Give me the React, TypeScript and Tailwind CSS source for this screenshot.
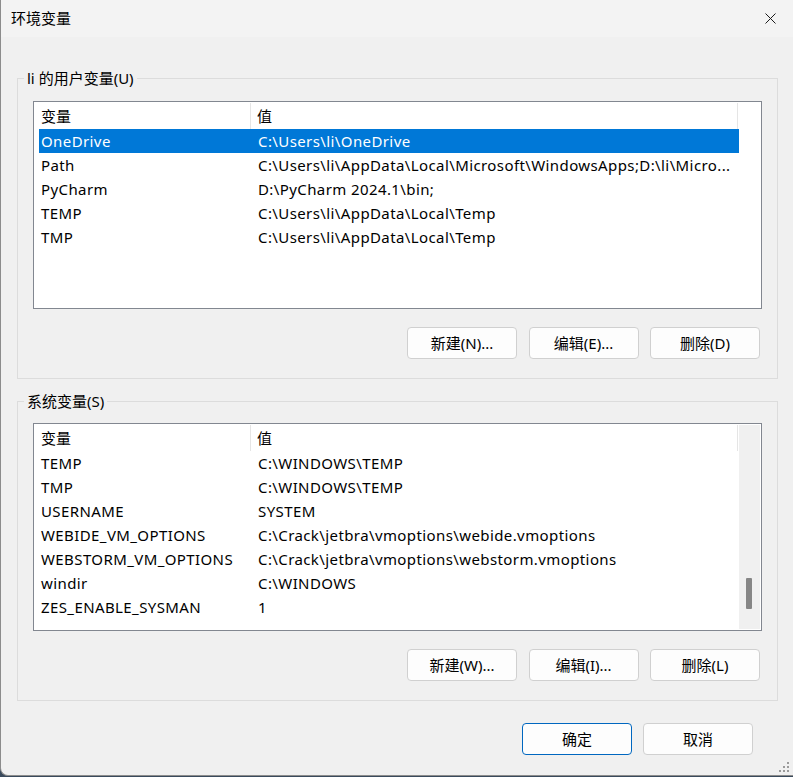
import React from 'react'

const FONT = { fontFamily: '"Noto Sans", "Noto Sans CJK SC", sans-serif' }

type Row = { name: string; value: string }

const userVars: Row[] = [
  { name: 'OneDrive', value: 'C:\\Users\\li\\OneDrive' },
  { name: 'Path', value: 'C:\\Users\\li\\AppData\\Local\\Microsoft\\WindowsApps;D:\\li\\Micro...' },
  { name: 'PyCharm', value: 'D:\\PyCharm 2024.1\\bin;' },
  { name: 'TEMP', value: 'C:\\Users\\li\\AppData\\Local\\Temp' },
  { name: 'TMP', value: 'C:\\Users\\li\\AppData\\Local\\Temp' },
]

const systemVars: Row[] = [
  { name: 'TEMP', value: 'C:\\WINDOWS\\TEMP' },
  { name: 'TMP', value: 'C:\\WINDOWS\\TEMP' },
  { name: 'USERNAME', value: 'SYSTEM' },
  { name: 'WEBIDE_VM_OPTIONS', value: 'C:\\Crack\\jetbra\\vmoptions\\webide.vmoptions' },
  { name: 'WEBSTORM_VM_OPTIONS', value: 'C:\\Crack\\jetbra\\vmoptions\\webstorm.vmoptions' },
  { name: 'windir', value: 'C:\\WINDOWS' },
  { name: 'ZES_ENABLE_SYSMAN', value: '1' },
]

function Button({ label, primary }: { label: string; primary?: boolean }) {
  return (
    <button
      className={
        'flex h-[32px] w-[110px] items-center justify-center rounded-[4px] border bg-[#fdfdfd] text-[15px] text-black ' +
        (primary ? 'border-[#0067c0]' : 'border-[#d0d0d0]')
      }
    >
      {label}
    </button>
  )
}

function VarList({
  rows,
  selected,
  scrollbar,
}: {
  rows: Row[]
  selected?: number
  scrollbar?: boolean
}) {
  return (
    <div className="flex h-[208px] border border-[#828790] bg-white">
      <div className="flex min-w-0 flex-1 flex-col pl-[5px]">
        <div className="flex h-[27px] shrink-0 items-stretch pt-[1px]">
          <div className="flex w-[212px] items-center border-r border-[#e5e5e5] pl-[2px]">变量</div>
          <div className="flex w-[487px] items-center border-r border-[#e5e5e5] pl-[6px]">值</div>
        </div>
        {rows.map((r, i) => {
          const sel = i === selected
          return (
            <div
              key={r.name + i}
              className={
                'flex h-[24px] w-[700px] shrink-0 items-center tracking-[0.4px] ' +
                (sel ? 'bg-[#0078d7] text-white' : 'text-black')
              }
            >
              <div className="w-[213px] overflow-hidden whitespace-nowrap pl-[2px]">{r.name}</div>
              <div className="w-[487px] overflow-hidden whitespace-nowrap pl-[6px]">{r.value}</div>
            </div>
          )
        })}
      </div>
      {scrollbar ? (
        <div className="relative my-[1px] mr-[1px] w-[21px] bg-[#f0f0f0]">
          <div className="absolute left-[7px] top-[153px] h-[31px] w-[6px] rounded-[1px] bg-[#868686]" />
        </div>
      ) : (
        <div className="w-[22px]" />
      )}
    </div>
  )
}

function Group({
  title,
  rows,
  selected,
  scrollbar,
  buttons,
  listTop,
}: {
  title: string
  rows: Row[]
  selected?: number
  scrollbar?: boolean
  buttons: string[]
  listTop: string
}) {
  return (
    <fieldset className="ml-[16px] mr-[15px] border border-[#dcdcdc] px-[15px] pb-[19px]">
      <legend className="ml-[-9px] h-[20px] px-[3px] leading-[20px]">{title}</legend>
      <div className={listTop}>
        <VarList rows={rows} selected={selected} scrollbar={scrollbar} />
      </div>
      <div className="mr-[2px] mt-[18px] flex justify-end gap-[11.5px]">
        {buttons.map((b) => (
          <Button key={b} label={b} />
        ))}
      </div>
    </fieldset>
  )
}

export default function App() {
  return (
    <div className="h-[777px] w-[793px] overflow-hidden bg-[#3a4a5c]">
      <div
        style={FONT}
        className="relative flex h-[776px] w-[793px] flex-col rounded-bl-[8px] border-b border-l border-[#8c8c8c] bg-[#f0f0f0] text-[15px] text-black"
      >
        <div className="flex h-[37px] shrink-0 items-center justify-between bg-[#f3f3f3] pl-[10px] pr-[16px]">
          <span className="text-[15px]">环境变量</span>
          <svg width="11" height="11" viewBox="0 0 11 11" className="mr-[1px]">
            <path d="M0.5 0.5 L10.5 10.5 M10.5 0.5 L0.5 10.5" stroke="#1a1a1a" strokeWidth="1" fill="none" />
          </svg>
        </div>
        <div className="mt-[31px]">
          <Group
            title="li 的用户变量(U)"
            rows={userVars}
            selected={0}
            listTop="mt-[13px]"
            buttons={['新建(N)...', '编辑(E)...', '删除(D)']}
          />
        </div>
        <div className="mt-[12px]">
          <Group
            title="系统变量(S)"
            rows={systemVars}
            scrollbar
            listTop="mt-[12px]"
            buttons={['新建(W)...', '编辑(I)...', '删除(L)']}
          />
        </div>
        <div className="mr-[40px] mt-[22px] flex justify-end gap-[11px]">
          <Button label="确定" primary />
          <Button label="取消" />
        </div>
        <svg width="14" height="14" viewBox="0 0 14 14" className="absolute bottom-[1px] right-[2px]">
          {[
            [11, 3],
            [11, 7],
            [7, 7],
            [11, 11],
            [7, 11],
            [3, 11],
          ].map(([x, y]) => (
            <rect key={`${x}-${y}`} x={x - 1} y={y - 1} width="2" height="2" fill="#9a9a9a" />
          ))}
        </svg>
      </div>
    </div>
  )
}
